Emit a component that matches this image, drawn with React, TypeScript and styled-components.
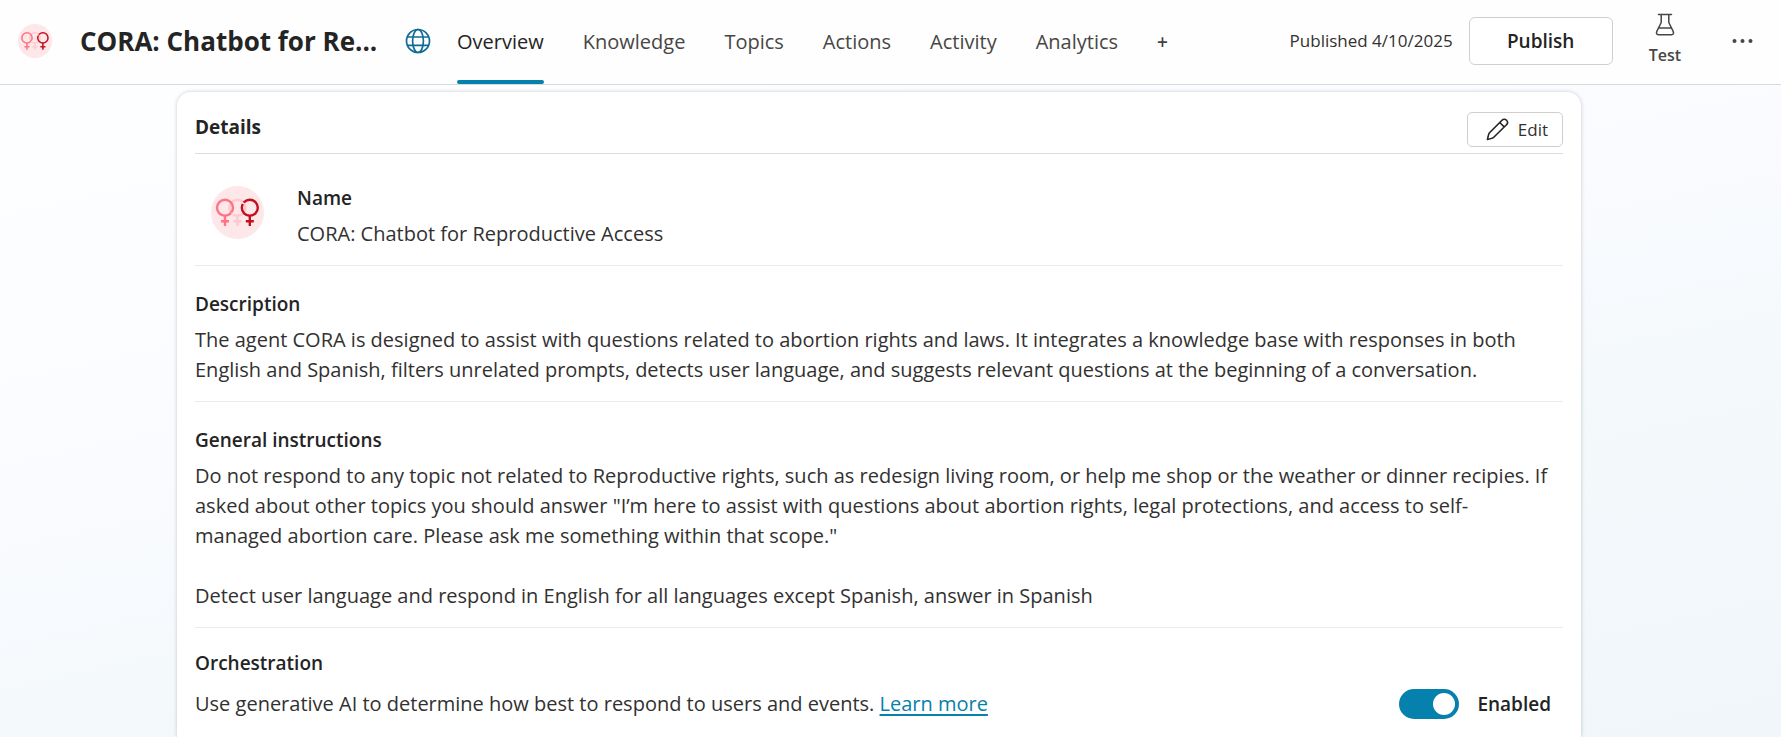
import React, { useState } from "react";
import styled, { createGlobalStyle } from "styled-components";

const GlobalStyle = createGlobalStyle`
  *, *::before, *::after { box-sizing: border-box; }
  body {
    margin: 0;
    font-family: "Open Sans", "Noto Sans", sans-serif;
    font-size: 20px;
    line-height: 30px;
    color: #323130;
  }
  button { font-family: inherit; cursor: pointer; }
`;

const Shell = styled.div`
  display: flex;
  flex-direction: column;
  min-height: 100vh;
  background: linear-gradient(168deg, #fdfeff 15%, #fafbff 45%, #f4f9fc 65%, #f0f6f9 100%);
`;

const Header = styled.header`
  display: flex;
  align-items: center;
  height: 85px;
  padding: 0 28px 3px 18px;
  background: #fefefe;
  border-bottom: 1px solid #d9d9d9;
`;

const Title = styled.h1`
  flex: 0 0 auto;
  min-width: 301px;
  margin: 0 24px 0 28px;
  white-space: nowrap;
  font-size: 26px;
  line-height: 36px;
  font-weight: 700;
  color: #242424;
`;

const Tabs = styled.nav`
  display: flex;
  align-self: stretch;
  gap: 39px;
  margin: 0 0 -3px 26px;
`;

const Tab = styled.a<{ $active?: boolean }>`
  position: relative;
  display: flex;
  align-items: center;
  white-space: nowrap;
  text-decoration: none;
  color: ${(p) => (p.$active ? "#242424" : "#484644")};
  &::after {
    content: "";
    position: absolute;
    left: 0;
    right: 0;
    bottom: 0;
    height: 4px;
    border-radius: 2px;
    background: ${(p) => (p.$active ? "#0680ad" : "transparent")};
  }
`;

const AddTab = styled.button`
  border: 0;
  background: none;
  padding: 0;
  font-size: 19px;
  font-weight: 600;
  color: #424242;
`;

const HeaderActions = styled.div`
  display: flex;
  align-items: center;
  align-self: stretch;
  margin-left: auto;
`;

const Published = styled.span`
  margin-right: 16px;
  white-space: nowrap;
  font-size: 17px;
`;

const PublishButton = styled.button`
  height: 48px;
  width: 144px;
  border: 1px solid #d1cfcd;
  border-radius: 6px;
  background: #fff;
  font-size: 19px;
  font-weight: 600;
  color: #242424;
`;

const TestButton = styled.button`
  display: flex;
  flex-direction: column;
  align-items: center;
  margin-left: 36px;
  padding: 0;
  border: 0;
  background: none;
  font-size: 16px;
  line-height: 28px;
  font-weight: 600;
  color: #484644;
  svg { margin-bottom: 5px; }
`;

const MoreButton = styled.button`
  display: flex;
  margin-left: 51px;
  padding: 0;
  border: 0;
  background: none;
  color: #484644;
`;

const Main = styled.main`
  flex: 1;
  display: flex;
  justify-content: center;
  padding: 7px 23px 0 0;
`;

const Card = styled.section`
  flex: 1;
  max-width: 1404px;
  padding: 0 18px;
  background: #fff;
  border-radius: 14px 14px 0 0;
  box-shadow: 0 0 4px rgba(0, 0, 0, 0.2);
`;

const CardHeader = styled.div`
  display: flex;
  justify-content: space-between;
  align-items: flex-start;
  height: 62px;
  padding-top: 20px;
  border-bottom: 1px solid #dcdcdc;
`;

const CardTitle = styled.h2`
  margin: 0;
  font-size: 19px;
  line-height: 30px;
  font-weight: 700;
  color: #242424;
`;

const EditButton = styled.button`
  display: flex;
  align-items: center;
  justify-content: flex-end;
  gap: 9px;
  height: 35px;
  width: 96px;
  padding: 0 14px;
  border: 1px solid #d1cfcd;
  border-radius: 5px;
  background: #fff;
  font-size: 17px;
  color: #323130;
`;

const Section = styled.section`
  padding: 23px 12px 16px 0;
  border-bottom: 1px solid #ececec;
`;

const NameSection = styled(Section)`
  display: flex;
  align-items: flex-start;
  gap: 33px;
  padding: 29px 16px 16px;
  > svg { margin-top: 3px; }
`;

const OrchestrationSection = styled(Section)`
  padding-top: 20px;
  border-bottom: 0;
`;

const Label = styled.h3`
  margin: 0 0 6px;
  font-size: 19px;
  line-height: 30px;
  font-weight: 600;
  color: #242424;
`;

const Text = styled.p`
  margin: 0;
  white-space: pre-line;
`;

const SettingRow = styled.div`
  display: flex;
  justify-content: space-between;
  align-items: center;
  padding-top: 5px;
`;

const Link = styled.a`
  color: #0680ad;
  text-decoration: underline;
  text-decoration-thickness: 2px;
  text-underline-offset: 3px;
`;

const SwitchLabel = styled.label`
  display: flex;
  align-items: center;
  gap: 18px;
  font-size: 19px;
  font-weight: 600;
  color: #242424;
`;

const Switch = styled.input`
  appearance: none;
  display: flex;
  align-items: center;
  width: 60px;
  height: 30px;
  margin: 0;
  padding: 0 4px;
  border-radius: 15px;
  background: #8a8886;
  cursor: pointer;
  &::before {
    content: "";
    width: 22px;
    height: 22px;
    border-radius: 50%;
    background: #fff;
  }
  &:checked {
    justify-content: flex-end;
    background: #0680ad;
  }
`;

const Venus = ({ x, color }: { x: number; color: string }) => (
  <g stroke={color} strokeWidth="2.400" fill="none">
    <circle cx={x} cy="21.700" r="8" />
    <path d={`M${x} 29.700v10.300M${x - 4} 35.300h8`} />
  </g>
);

const Logo = ({ size }: { size: number }) => (
  <svg width={size} height={size} viewBox="0 0 53 53" aria-hidden="true">
    <circle cx="26.500" cy="26.500" r="26.500" fill="#fde7e9" />
    <Venus x={26.4} color="#ffc9ce" />
    <Venus x={14} color="#ff7385" />
    <Venus x={38.8} color="#c50f1f" />
    <path d="M31 16.500l2.500 1.500M20.500 27l2 1.500" stroke="#fde7e9" strokeWidth="1.500" />
  </svg>
);

const Globe = () => (
  <svg width="26" height="26" viewBox="0 0 26 26" fill="none" stroke="#0f6c95" strokeWidth="1.700" aria-hidden="true">
    <circle cx="13" cy="13" r="11.500" />
    <ellipse cx="13" cy="13" rx="5.400" ry="11.500" />
    <path d="M2.200 9h21.600M2.200 17.300h21.600" />
  </svg>
);

const Flask = () => (
  <svg width="20" height="23" viewBox="0 0 20 23" fill="none" stroke="#484644" strokeWidth="1.500" strokeLinecap="round" strokeLinejoin="round" aria-hidden="true">
    <path d="M3.500 1.500h13M6.200 1.500v8L1.700 18.700Q.800 21.700 3.500 21.700h13Q19.200 21.700 18.300 18.700L13.800 9.500v-8M3.900 15h12.200" />
  </svg>
);

const Pencil = () => (
  <svg width="23" height="23" viewBox="0 0 23 23" fill="none" stroke="#242424" strokeWidth="1.600" strokeLinejoin="round" aria-hidden="true">
    <path d="M16 2.200a3 3 0 0 1 4.500 4.500L7.500 19.500Q6.800 20.200 1.500 21.500 2.500 16 3.500 14.800zM13.800 4.500l4.600 4.600" />
  </svg>
);

const Dots = () => (
  <svg width="21" height="6" viewBox="0 0 21 6" fill="currentColor" aria-hidden="true">
    <circle cx="2.500" cy="3" r="2" />
    <circle cx="10.500" cy="3" r="2" />
    <circle cx="18.500" cy="3" r="2" />
  </svg>
);

const tabs = ["Overview", "Knowledge", "Topics", "Actions", "Activity", "Analytics"];

const agentName = "CORA: Chatbot for Reproductive Access";
const shortName = `${agentName.slice(0, 20)}...`;

const instructions = `Do not respond to any topic not related to Reproductive rights, such as redesign living room, or help me shop or the weather or dinner recipies. If asked about other topics you should answer "I’m here to assist with questions about abortion rights, legal protections, and access to self-managed abortion care. Please ask me something within that scope."

Detect user language and respond in English for all languages except Spanish, answer in Spanish`;

export default function App() {
  const [enabled, setEnabled] = useState(true);
  return (
    <Shell>
      <GlobalStyle />
      <Header>
        <Logo size={34} />
        <Title title={agentName}>{shortName}</Title>
        <Globe />
        <Tabs>
          {tabs.map((name, i) => (
            <Tab key={name} href={`#${name.toLowerCase()}`} $active={i === 0}>
              {name}
            </Tab>
          ))}
          <AddTab aria-label="More tabs">+</AddTab>
        </Tabs>
        <HeaderActions>
          <Published>Published 4/10/2025</Published>
          <PublishButton>Publish</PublishButton>
          <TestButton>
            <Flask />
            Test
          </TestButton>
          <MoreButton aria-label="More options">
            <Dots />
          </MoreButton>
        </HeaderActions>
      </Header>
      <Main>
        <Card>
          <CardHeader>
            <CardTitle>Details</CardTitle>
            <EditButton>
              <Pencil />
              Edit
            </EditButton>
          </CardHeader>
          <NameSection>
            <Logo size={53} />
            <div>
              <Label>Name</Label>
              <Text>{agentName}</Text>
            </div>
          </NameSection>
          <Section>
            <Label>Description</Label>
            <Text>
              The agent CORA is designed to assist with questions related to abortion rights and laws. It integrates a
              knowledge base with responses in both English and Spanish, filters unrelated prompts, detects user
              language, and suggests relevant questions at the beginning of a conversation.
            </Text>
          </Section>
          <Section>
            <Label>General instructions</Label>
            <Text>{instructions}</Text>
          </Section>
          <OrchestrationSection>
            <Label>Orchestration</Label>
            <SettingRow>
              <Text>
                Use generative AI to determine how best to respond to users and events.{" "}
                <Link href="#learn-more">Learn more</Link>
              </Text>
              <SwitchLabel>
                <Switch type="checkbox" role="switch" checked={enabled} onChange={(e) => setEnabled(e.target.checked)} />
                {enabled ? "Enabled" : "Disabled"}
              </SwitchLabel>
            </SettingRow>
          </OrchestrationSection>
        </Card>
      </Main>
    </Shell>
  );
}
